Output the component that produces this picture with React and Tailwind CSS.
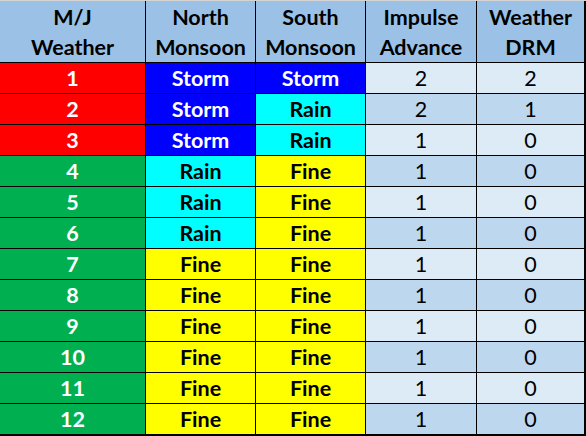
import React from 'react';

const rows = [
    ['1', 'Storm', 'Storm', '2', '2'],
    ['2', 'Storm', 'Rain', '2', '1'],
    ['3', 'Storm', 'Rain', '1', '0'],
    ['4', 'Rain', 'Fine', '1', '0'],
    ['5', 'Rain', 'Fine', '1', '0'],
    ['6', 'Rain', 'Fine', '1', '0'],
    ['7', 'Fine', 'Fine', '1', '0'],
    ['8', 'Fine', 'Fine', '1', '0'],
    ['9', 'Fine', 'Fine', '1', '0'],
    ['10', 'Fine', 'Fine', '1', '0'],
    ['11', 'Fine', 'Fine', '1', '0'],
    ['12', 'Fine', 'Fine', '1', '0'],
];

const weatherClass = {
    Storm: 'bg-[#0000ff] text-white',
    Rain: 'bg-[#00ffff] text-black',
    Fine: 'bg-[#ffff00] text-black',
};

const headers = [
    ['M/J', 'Weather'],
    ['North', 'Monsoon'],
    ['South', 'Monsoon'],
    ['Impulse', 'Advance'],
    ['Weather', 'DRM'],
];

function App() {
    return (
        <div
            className="w-[586px] h-[436px] bg-black border-t border-[#d4d4d4] pr-[2px] pb-[2px] text-[21.5px]"
            style={{ fontFamily: 'Lato, "Open Sans", sans-serif' }}
        >
            <div className="grid grid-cols-[145px_109px_109px_110px_107px] grid-rows-[61px_repeat(12,30px)] gap-px">
                {headers.map((h, i) => (
                    <div
                        key={i}
                        className="bg-[#9bc2e6] flex flex-col items-center justify-center font-bold text-black leading-[30px]"
                    >
                        <span>{h[0]}</span>
                        <span>{h[1]}</span>
                    </div>
                ))}
                {rows.map((r, i) => {
                    const first = i < 3 ? 'bg-[#ff0000]' : 'bg-[#00b050]';
                    const light = i % 2 === 0 ? 'bg-[#ddebf7]' : 'bg-[#bdd7ee]';
                    return (
                        <React.Fragment key={i}>
                            <div className={`${first} flex items-center justify-center font-bold text-white`}>{r[0]}</div>
                            <div className={`${weatherClass[r[1]]} flex items-center justify-center font-bold`}>{r[1]}</div>
                            <div className={`${weatherClass[r[2]]} flex items-center justify-center font-bold`}>{r[2]}</div>
                            <div className={`${light} flex items-center justify-center text-black`}>{r[3]}</div>
                            <div className={`${light} flex items-center justify-center text-black`}>{r[4]}</div>
                        </React.Fragment>
                    );
                })}
            </div>
        </div>
    );
}

export default App;
